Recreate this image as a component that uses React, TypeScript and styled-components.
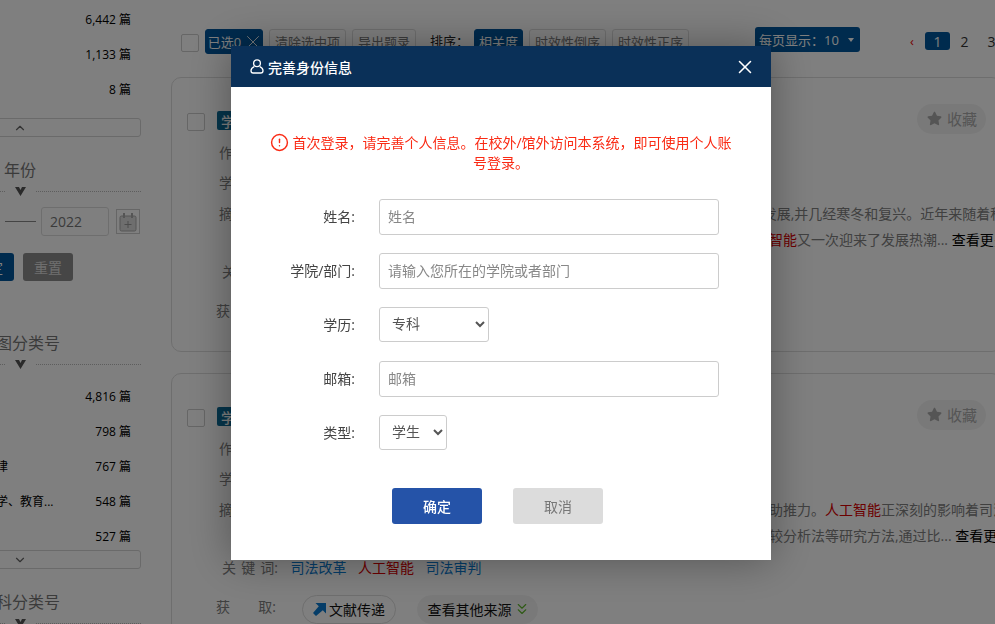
import React from "react";
import styled, { createGlobalStyle } from "styled-components";
import { ChevronDown, ChevronUp, ChevronsDown, CircleAlert, X } from "lucide-react";
import { FaStar } from "react-icons/fa";

const GlobalStyle = createGlobalStyle`
  html, body {
    margin: 0;
    height: 100%;
    overflow: hidden;
    background: #fff;
    font-family: "Open Sans", "Noto Sans CJK SC", sans-serif;
    color: #808080;
    font-size: 14px;
  }
  * { box-sizing: border-box; }
`;

const Page = styled.div`
  display: grid;
  grid-template-columns: 141px 831px;
  column-gap: 30px;
  width: 995px;
  height: 624px;
  overflow: hidden;
`;

/* left filter column, cut off by the window edge */
const SideClip = styled.aside`
  width: 141px;
  overflow: hidden;
`;

const SideInner = styled.div`
  width: 242px;
  margin-left: -101px;
  padding-top: 5px;
`;

const CountList = styled.div<{ $top?: number }>`
  display: flex;
  flex-direction: column;
  row-gap: 7px;
  margin-top: ${(p) => p.$top ?? 0}px;
`;

const CountRow = styled.div`
  display: flex;
  justify-content: space-between;
  align-items: center;
  height: 28px;
  padding: 0 10px 0 49px;
  font-size: 12px;
  color: #000;
`;

const ToggleBar = styled.div<{ $top: number }>`
  display: flex;
  justify-content: center;
  align-items: center;
  height: 19px;
  margin-top: ${(p) => p.$top}px;
  border: 1px solid #d4d4d4;
  border-radius: 3px;
  color: #666;
`;

const FilterTitle = styled.div<{ $top: number }>`
  height: 26px;
  margin-top: ${(p) => p.$top}px;
  text-align: center;
  font-size: 16px;
  line-height: 24px;
  color: #777;
`;

const TitleRule = styled.div`
  display: flex;
  align-items: center;
  justify-content: center;
  column-gap: 10px;
  height: 14px;
`;

const Dotted = styled.span`
  flex: 1;
  border-top: 1px dotted #bbb;
`;

const YearRow = styled.div`
  display: flex;
  justify-content: flex-end;
  align-items: center;
  column-gap: 5px;
  height: 29px;
  margin-top: 9px;
  padding-right: 1px;
`;

const YearDash = styled.span`
  width: 31px;
  border-top: 1px solid #888;
`;

const YearBox = styled.div`
  display: flex;
  align-items: center;
  width: 68px;
  height: 29px;
  padding-left: 8px;
  border: 1px solid #ddd;
  border-radius: 3px;
  font-size: 14px;
  color: #777;
`;

const CalendarBox = styled.div`
  display: flex;
  align-items: center;
  justify-content: center;
  width: 24px;
  height: 25px;
  margin-left: 2px;
  border: 1px solid #ccc;
`;

const YearActions = styled.div`
  display: flex;
  column-gap: 9px;
  margin-top: 17px;
  padding-left: 65px;
`;

const YearAction = styled.div<{ $primary?: boolean }>`
  display: flex;
  align-items: center;
  justify-content: center;
  width: 50px;
  height: 28px;
  border-radius: 3px;
  background: ${(p) => (p.$primary ? "#00569c" : "#8c8c8c")};
  color: ${(p) => (p.$primary ? "#fff" : "#ddd")};
  font-size: 14px;
`;

const Main = styled.main`
  display: flex;
  flex-direction: column;
  row-gap: 21px;
`;

const Toolbar = styled.div`
  display: flex;
  align-items: flex-start;
  height: 27px;
  margin-top: 27px;
  margin-bottom: 2px;
  padding-left: 10px;
  white-space: nowrap;
`;

const Check = styled.span<{ $top?: number }>`
  flex: none;
  width: 18px;
  height: 18px;
  margin-top: ${(p) => p.$top ?? 0}px;
  border: 1px solid #ccc;
  border-radius: 2px;
  background: #fff;
`;

const Chip = styled.div<{ $w: number; $on?: boolean; $left?: number }>`
  display: flex;
  align-items: center;
  justify-content: center;
  flex: none;
  width: ${(p) => p.$w}px;
  height: 25px;
  margin-top: 2px;
  margin-left: ${(p) => p.$left ?? 6}px;
  border: 1px solid ${(p) => (p.$on ? "#00569c" : "#ddd")};
  border-radius: 3px;
  background: ${(p) => (p.$on ? "#00569c" : "#fff")};
  color: ${(p) => (p.$on ? "#fff" : "#777")};
  font-size: 13px;
`;

const ChipClose = styled(X)`
  margin: 0 -4px 0 1px;
`;

const SortLabel = styled.span`
  flex: none;
  width: 35px;
  height: 25px;
  margin: 2px 0 0 14px;
  color: #222;
  font-size: 13px;
  line-height: 25px;
`;

const PageSize = styled.div`
  display: flex;
  align-items: center;
  flex: none;
  column-gap: 9px;
  width: 105px;
  height: 25px;
  margin-left: 66px;
  padding-left: 4px;
  border-radius: 3px;
  background: #00569c;
  color: #fff;
  font-size: 13px;
`;

const Caret = styled.i`
  width: 0;
  height: 0;
  border-left: 3px solid transparent;
  border-right: 3px solid transparent;
  border-top: 4px solid #fff;
`;

const Pager = styled.div`
  display: flex;
  align-items: center;
  height: 18px;
  margin: 5px 0 0 50px;
  color: #333;
  font-size: 14px;
`;

const PagerItem = styled.span<{ $on?: boolean }>`
  display: flex;
  align-items: center;
  justify-content: center;
  width: 25px;
  height: 18px;
  margin-right: 2px;
  border-radius: 3px;
  background: ${(p) => (p.$on ? "#00569c" : "transparent")};
  color: ${(p) => (p.$on ? "#fff" : "#333")};
`;

const PagerPrev = styled.span`
  width: 15px;
  color: #e00;
  font-size: 13px;
`;

const Card = styled.article`
  flex: none;
  height: 275px;
  padding: 25px 15px 0 15px;
  border: 1px solid #ddd;
  border-radius: 10px;
`;

const CardHead = styled.div`
  display: flex;
  align-items: flex-start;
  height: 34px;
`;

const Tag = styled.span`
  display: flex;
  align-items: center;
  height: 19px;
  margin: 8px 0 0 12px;
  padding: 0 4px;
  border-radius: 2px;
  background: #0a6a96;
  color: #fff;
  font-size: 14px;
  font-weight: 500;
`;

const Favorite = styled.div`
  display: flex;
  align-items: center;
  column-gap: 5px;
  height: 30px;
  margin: 1px 0 0 auto;
  padding: 0 9px 2px 10px;
  border-radius: 15px;
  background: #f3f3f3;
  color: #aaa;
  font-size: 15px;
`;

const InfoRow = styled.div`
  display: flex;
  align-items: center;
  height: 30px;
  padding-left: 32px;
  white-space: nowrap;
`;

const Abstract = styled.div`
  display: flex;
  margin-top: 4px;
  padding-left: 32px;
  line-height: 26px;
  white-space: nowrap;
`;

const AbstractLabel = styled.span`
  flex: none;
  width: 32px;
`;

const Red = styled.span`
  color: #d80000;
`;

const More = styled.span`
  color: #000;
`;

const KeywordRow = styled.div`
  display: flex;
  align-items: center;
  column-gap: 11.5px;
  height: 26px;
  margin-top: 5px;
  padding-left: 35px;
  white-space: nowrap;
`;

const FieldName = styled.span<{ $w: number; $right?: number }>`
  display: flex;
  justify-content: space-between;
  flex: none;
  width: ${(p) => p.$w}px;
  margin-right: ${(p) => p.$right ?? 2}px;
`;

const Keyword = styled.span<{ $hit?: boolean }>`
  color: ${(p) => (p.$hit ? "#d80000" : "#0a7ad0")};
`;

const FetchRow = styled.div`
  display: flex;
  align-items: center;
  height: 30px;
  margin-top: 11px;
  padding-left: 29px;
  white-space: nowrap;
`;

const FetchPill = styled.div<{ $filled?: boolean; $left: number; $w: number }>`
  display: flex;
  align-items: center;
  justify-content: center;
  column-gap: ${(p) => (p.$filled ? 1 : 3)}px;
  flex: none;
  width: ${(p) => p.$w}px;
  height: 29px;
  margin-top: 6px;
  margin-left: ${(p) => p.$left}px;
  padding-left: ${(p) => (p.$filled ? 3 : 0)}px;
  border: 1px solid ${(p) => (p.$filled ? "#f3f3f3" : "#ddd")};
  border-radius: 15px;
  background: ${(p) => (p.$filled ? "#f3f3f3" : "transparent")};
  color: #111;
`;

const Overlay = styled.div`
  position: fixed;
  inset: 0;
  display: flex;
  align-items: flex-start;
  background: rgba(0, 0, 0, 0.5);
`;

const Modal = styled.section`
  flex: none;
  width: 540px;
  height: 514px;
  margin: 46px 0 0 231px;
  background: #fff;
  box-shadow: 0 0 40px rgba(0, 0, 0, 0.35);
`;

const ModalHeader = styled.header`
  display: flex;
  align-items: center;
  height: 41px;
  padding: 0 15px 0 19px;
  background: #0a3058;
  color: #fff;
`;

const ModalTitle = styled.h2`
  margin: 0 0 0 4px;
  font-size: 14px;
  font-weight: 500;
`;

const CloseButton = styled.button`
  display: flex;
  margin-left: auto;
  padding: 0;
  border: 0;
  background: none;
  color: #fff;
`;

const Notice = styled.p`
  height: 40px;
  margin: 46px 0 0;
  padding: 0 35px;
  color: #fa2a14;
  font-size: 14px;
  line-height: 20px;
  text-align: center;
`;

const NoticeIcon = styled(CircleAlert)`
  margin-right: 3px;
  vertical-align: -4px;
`;

const Form = styled.form`
  display: flex;
  flex-direction: column;
  row-gap: 18px;
  margin-top: 26px;
`;

const FormRow = styled.div`
  display: flex;
  align-items: center;
  column-gap: 24px;
  height: 36px;
`;

const FormLabel = styled.label`
  flex: none;
  width: 124px;
  padding-bottom: 3px;
  color: #444;
  font-size: 14px;
  text-align: right;
`;

const TextInput = styled.input`
  width: 340px;
  height: 36px;
  padding: 0 8px 2px;
  border: 1px solid #ccc;
  border-radius: 3px;
  outline: none;
  font: inherit;
  color: #333;
  &::placeholder {
    color: #888;
    opacity: 1;
  }
`;

const Select = styled.select<{ $w: number }>`
  width: ${(p) => p.$w}px;
  height: 35px;
  margin-bottom: 1px;
  padding: 0 8px 2px;
  border: 1px solid #ccc;
  border-radius: 3px;
  background: #fff;
  font: inherit;
  color: #555;
`;

const ModalActions = styled.div`
  display: flex;
  column-gap: 31px;
  margin-top: 37px;
  padding-left: 161px;
`;

const ActionButton = styled.button<{ $primary?: boolean }>`
  width: 90px;
  height: 36px;
  padding: 0;
  border: 0;
  border-radius: 3px;
  background: ${(p) => (p.$primary ? "#2553a8" : "#dcdcdc")};
  color: ${(p) => (p.$primary ? "#fff" : "#777")};
  font: inherit;
  font-weight: ${(p) => (p.$primary ? 500 : 400)};
`;

const RuleMark = () => (
  <svg width="11" height="9" viewBox="0 0 11 9">
    <path d="M0 0h4l1.5 3L7 0h4L5.5 9z" fill="#555" />
  </svg>
);

const FilterHead = ({ title, top }: { title: string; top: number }) => (
  <>
    <FilterTitle $top={top}>{title}</FilterTitle>
    <TitleRule>
      <Dotted />
      <RuleMark />
      <Dotted />
    </TitleRule>
  </>
);

const CalendarIcon = () => (
  <svg width="18" height="20" viewBox="0 0 18 20" fill="none">
    <rect x="1" y="4" width="16" height="15" rx="1.5" fill="#ddd" stroke="#aaa" />
    <rect x="4" y="1" width="2" height="5" fill="#aaa" />
    <rect x="12" y="1" width="2" height="5" fill="#aaa" />
    <path d="M9 9v7M5.5 12.5h7" stroke="#999" />
  </svg>
);

const UserIcon = () => (
  <svg width="14" height="15" viewBox="0 0 14 15" fill="none" stroke="#fff" strokeWidth="1.3">
    <circle cx="7" cy="4.2" r="3.4" />
    <path d="M4.2 7.6C2.4 8.4 1 10 1 11.8 1 13.3 2 14 3.2 14h7.6c1.2 0 2.2-.7 2.2-2.2 0-1.8-1.4-3.4-3.2-4.2" />
  </svg>
);

const ArrowIcon = () => (
  <svg width="13" height="13" viewBox="0 0 13 13">
    <path d="M2.5 0H13v10.5l-3.2-3.2L3 13 0 10l5.8-6.8z" fill="#0a7ad0" />
  </svg>
);

type ArticleProps = {
  line1: React.ReactNode;
  line2: React.ReactNode;
  keywords: { text: string; hit?: boolean }[];
};

const Article = ({ line1, line2, keywords }: ArticleProps) => (
  <Card>
    <CardHead>
      <Check $top={10} />
      <Tag>学位论文</Tag>
      <Favorite>
        <FaStar size={15} color="#aaa" />
        收藏
      </Favorite>
    </CardHead>
    <InfoRow>作 者:</InfoRow>
    <InfoRow>学 位:</InfoRow>
    <Abstract>
      <AbstractLabel>摘要</AbstractLabel>
      <div>
        <div>{line1}</div>
        <div>{line2}</div>
      </div>
    </Abstract>
    <KeywordRow>
      <FieldName $w={56} $right={1}>
        <span>关</span>
        <span>键</span>
        <span>词:</span>
      </FieldName>
      {keywords.map((k) => (
        <Keyword key={k.text} $hit={k.hit}>
          {k.text}
        </Keyword>
      ))}
    </KeywordRow>
    <FetchRow>
      <FieldName $w={60}>
        <span>获</span>
        <span>取:</span>
      </FieldName>
      <FetchPill $left={24} $w={94}>
        <ArrowIcon />
        文献传递
      </FetchPill>
      <FetchPill $filled $left={21} $w={121}>
        查看其他来源
        <ChevronsDown size={18} strokeWidth={1.5} color="#5fb52c" />
      </FetchPill>
    </FetchRow>
  </Card>
);

const App: React.FC = () => {
  return (
    <>
      <GlobalStyle />
      <Page>
        <SideClip>
          <SideInner>
            <CountList>
              <CountRow><span>期刊</span><span>6,442 篇</span></CountRow>
              <CountRow><span>学位</span><span>1,133 篇</span></CountRow>
              <CountRow><span>其他</span><span>8 篇</span></CountRow>
            </CountList>
            <ToggleBar $top={15}><ChevronUp size={14} /></ToggleBar>
            <FilterHead title="年份" top={21} />
            <YearRow>
              <YearDash />
              <YearBox>2022</YearBox>
              <CalendarBox><CalendarIcon /></CalendarBox>
            </YearRow>
            <YearActions>
              <YearAction $primary>确定</YearAction>
              <YearAction>重置</YearAction>
            </YearActions>
            <FilterHead title="中图分类号" top={50} />
            <CountList $top={11}>
              <CountRow><span>工业技术</span><span>4,816 篇</span></CountRow>
              <CountRow><span>经济</span><span>798 篇</span></CountRow>
              <CountRow><span>政治、法律</span><span>767 篇</span></CountRow>
              <CountRow><span>文化、科学、教育...</span><span>548 篇</span></CountRow>
              <CountRow><span>医药卫生</span><span>527 篇</span></CountRow>
            </CountList>
            <ToggleBar $top={0}><ChevronDown size={14} /></ToggleBar>
            <FilterHead title="学科分类号" top={21} />
          </SideInner>
        </SideClip>
        <Main>
          <Toolbar>
            <Check $top={7} />
            <Chip $on $w={58} $left={6}>已选0<ChipClose size={22} strokeWidth={1} /></Chip>
            <Chip $w={77}>清除选中项</Chip>
            <Chip $w={64}>导出题录</Chip>
            <SortLabel>排序：</SortLabel>
            <Chip $on $w={49} $left={9}>相关度</Chip>
            <Chip $w={77}>时效性倒序</Chip>
            <Chip $w={77} $left={6}>时效性正序</Chip>
            <PageSize>每页显示：10 <Caret /></PageSize>
            <Pager>
              <PagerPrev>‹</PagerPrev>
              <PagerItem $on>1</PagerItem>
              <PagerItem>2</PagerItem>
              <PagerItem>3</PagerItem>
            </Pager>
          </Toolbar>
          <Article
            line1={<>人工智能这一概念自1956 年在达特茅斯会议上被正式提出以来，历经数十年的持续发展,并几经寒冬和复兴。近年来随着科技的进步</>}
            line2={<>以大数据、云计算与深度学习等新技术的突破为其提供了全新的发展动力，使得<Red>人工智能</Red>又一次迎来了发展热潮... <More>查看更多</More></>}
            keywords={[{ text: "人工智能", hit: true }, { text: "发展" }]}
          />
          <Article
            line1={<>司法改革是国家治理现代化的重要内容，而信息技术的迅速发展为其提供了更有力的助推力。<Red>人工智能</Red>正深刻的影响着司法实践</>}
            line2={<>本文立足于当前我国司法审判实践的现状，综合运用文献研究法、案例分析法以及比较分析法等研究方法,通过比... <More>查看更多</More></>}
            keywords={[{ text: "司法改革" }, { text: "人工智能", hit: true }, { text: "司法审判" }]}
          />
        </Main>
      </Page>
      <Overlay>
        <Modal>
          <ModalHeader>
            <UserIcon />
            <ModalTitle>完善身份信息</ModalTitle>
            <CloseButton type="button"><X size={22} strokeWidth={1.7} /></CloseButton>
          </ModalHeader>
          <Notice>
            <NoticeIcon size={19} strokeWidth={1.8} />
            首次登录，请完善个人信息。在校外/馆外访问本系统，即可使用个人账号登录。
          </Notice>
          <Form>
            <FormRow>
              <FormLabel>姓名:</FormLabel>
              <TextInput placeholder="姓名" />
            </FormRow>
            <FormRow>
              <FormLabel>学院/部门:</FormLabel>
              <TextInput placeholder="请输入您所在的学院或者部门" />
            </FormRow>
            <FormRow>
              <FormLabel>学历:</FormLabel>
              <Select $w={110} defaultValue="专科">
                <option>专科</option>
                <option>本科</option>
                <option>硕士</option>
                <option>博士</option>
              </Select>
            </FormRow>
            <FormRow>
              <FormLabel>邮箱:</FormLabel>
              <TextInput placeholder="邮箱" />
            </FormRow>
            <FormRow>
              <FormLabel>类型:</FormLabel>
              <Select $w={68} defaultValue="学生">
                <option>学生</option>
                <option>教师</option>
              </Select>
            </FormRow>
          </Form>
          <ModalActions>
            <ActionButton type="button" $primary>确定</ActionButton>
            <ActionButton type="button">取消</ActionButton>
          </ModalActions>
        </Modal>
      </Overlay>
    </>
  );
};

export default App;
